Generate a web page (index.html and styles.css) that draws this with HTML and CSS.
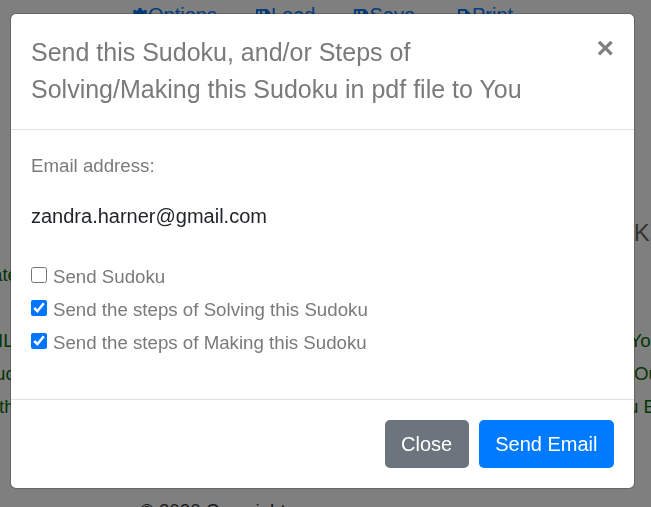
FILE: index.html
```html
<!DOCTYPE html>
<html lang="en">
<head>
    <meta charset="UTF-8">
    <meta name="viewport" content="width=device-width, initial-scale=1.0">
    <title>Send Sudoku</title>
    <link rel="stylesheet" href="styles.css">
</head>
<body>
    <div class="page">
        <nav class="top-nav">
            <a href="#"><svg class="nav-icon" viewBox="0 0 16 16"><path d="M6.500 0h3l.4 2 1.600.7 1.800-1.100 2 2-1.100 1.800.7 1.600 2 .4v3l-2 .4-.7 1.600 1.100 1.800-2 2-1.800-1.100-1.600.7-.4 2h-3l-.4-2-1.600-.7-1.800 1.100-2-2 1.100-1.800-.7-1.600-2-.4v-3l2-.4.7-1.600-1.100-1.800 2-2 1.800 1.100 1.600-.7z"/></svg>Options</a>
            <a href="#"><svg class="nav-icon" viewBox="0 0 16 16"><path d="M1 1h11l3 3v11H1zM3 3v4h2V3zm4 0v4h3V3z" fill-rule="evenodd"/></svg>Load</a>
            <a href="#"><svg class="nav-icon" viewBox="0 0 16 16"><path d="M1 1h11l3 3v11H1zM3 3v4h2V3zm4 0v4h3V3z" fill-rule="evenodd"/></svg>Save</a>
            <a class="print-link" href="#"><svg class="nav-icon" viewBox="0 0 16 16"><path d="M2 1h8l4 4v10H2zM4 3v10h8V6H9V3z" fill-rule="evenodd"/></svg>Print</a>
        </nav>
        <h2 class="side-heading">KU</h2>
        <div class="side-text">
            <p><span class="cut-left-8">ate</span></p>
            <p></p>
            <p><span class="cut-left-2">IL</span><span class="cut-right-10">You</span></p>
            <p><span class="cut-left-5">uc</span><span class="cut-right-8">Ou</span></p>
            <p><span class="cut-left-1">th</span><span class="cut-right-5">u E</span></p>
        </div>
        <p class="copyright">© 2020 Copyright</p>
    </div>

    <div class="backdrop"></div>

    <div class="modal">
        <div class="modal-header">
            <h4 class="modal-title">Send this Sudoku, and/or Steps of Solving/Making this Sudoku in pdf file to You</h4>
            <button class="close-x" type="button">×</button>
        </div>
        <div class="modal-body">
            <label class="email-label" for="email">Email address:</label>
            <input class="email-input" id="email" type="email" value="zandra.harner@gmail.com">
            <label class="check-row"><input type="checkbox">Send Sudoku</label>
            <label class="check-row"><input type="checkbox" checked>Send the steps of Solving this Sudoku</label>
            <label class="check-row"><input type="checkbox" checked>Send the steps of Making this Sudoku</label>
        </div>
        <div class="modal-footer">
            <button class="btn btn-secondary" type="button">Close</button>
            <button class="btn btn-primary" type="button">Send Email</button>
        </div>
    </div>
</body>
</html>
```
FILE: styles.css
```css
* {
    box-sizing: border-box;
}

html, body {
    height: 100%;
}

body {
    margin: 0;
    overflow: hidden;
    font-family: "Liberation Sans", Arial, sans-serif;
    background: white;
}

.page {
    height: 507px;
    overflow: hidden;
    display: flex;
    flex-direction: column;
    font-size: 18.7px;
}

.top-nav {
    display: flex;
    gap: 38px;
    padding: 4px 0 0 132px;
    font-size: 20px;
}

.top-nav a {
    color: #007bff;
    text-decoration: none;
    display: flex;
    align-items: center;
}

.top-nav .print-link {
    margin-left: 3px;
}

.nav-icon {
    width: 16px;
    height: 16px;
    fill: #007bff;
}

.side-heading {
    margin: 192px -16px 0 0;
    text-align: right;
    font-size: 24px;
    font-weight: normal;
    color: #666;
}

.side-text {
    margin-top: 11px;
    color: #0a6b0a;
}

.side-text p {
    display: flex;
    justify-content: space-between;
    margin: 0;
    height: 33px;
    line-height: 33px;
}

/* words of the page behind run off the window edges */
.cut-left-1 { margin-left: -1px; }
.cut-left-2 { margin-left: -2px; }
.cut-left-5 { margin-left: -5px; }
.cut-left-8 { margin-left: -8px; }
.cut-right-5 { margin-right: -5px; }
.cut-right-8 { margin-right: -8px; }
.cut-right-10 { margin-right: -10px; }

.copyright {
    margin: auto 0 -8px 140px;
    height: 15px;
    line-height: 21px;
    color: #333;
}

.backdrop {
    position: fixed;
    inset: 0;
    background: rgba(0, 0, 0, 0.5);
}

.modal {
    position: fixed;
    top: 13px;
    left: 10px;
    width: 625px;
    height: 476px;
    display: flex;
    flex-direction: column;
    background: white;
    background-clip: padding-box;
    border: 1px solid rgba(0, 0, 0, 0.2);
    border-radius: 6px;
}

.modal-header {
    display: flex;
    justify-content: space-between;
    align-items: flex-start;
    height: 116px;
    padding: 20px;
    border-bottom: 1px solid #dee2e6;
}

.modal-title {
    margin: 0;
    width: 530px;
    font-size: 25px;
    font-weight: normal;
    line-height: 37px;
    color: #7a7a7a;
}

.close-x {
    border: none;
    background: none;
    padding: 0;
    margin-top: -1px;
    font-family: inherit;
    font-size: 30px;
    font-weight: bold;
    line-height: 30px;
    color: #808080;
}

.modal-body {
    flex: 1;
    display: flex;
    flex-direction: column;
    padding: 25px 20px 0;
}

.email-label {
    font-size: 18.7px;
    line-height: 21px;
    color: #7a7a7a;
}

.email-input {
    margin: 28px 0 32px;
    padding: 0;
    border: none;
    outline: none;
    font-family: inherit;
    font-size: 20px;
    line-height: 24px;
    color: #212529;
}

.check-row {
    display: flex;
    align-items: center;
    gap: 6px;
    height: 33px;
    font-size: 18.7px;
    color: #7a7a7a;
}

.check-row input {
    width: 16px;
    height: 16px;
    margin: 0 0 4px;
}

.modal-footer {
    display: flex;
    justify-content: flex-end;
    gap: 10px;
    padding: 20px;
    border-top: 1px solid #dee2e6;
}

.btn {
    border: 1px solid transparent;
    border-radius: 5px;
    padding: 8px 15.5px;
    font-family: inherit;
    font-size: 20px;
    line-height: 30px;
    color: white;
}

.btn-secondary {
    background-color: #6c757d;
}

.btn-primary {
    background-color: #007bff;
}
```
